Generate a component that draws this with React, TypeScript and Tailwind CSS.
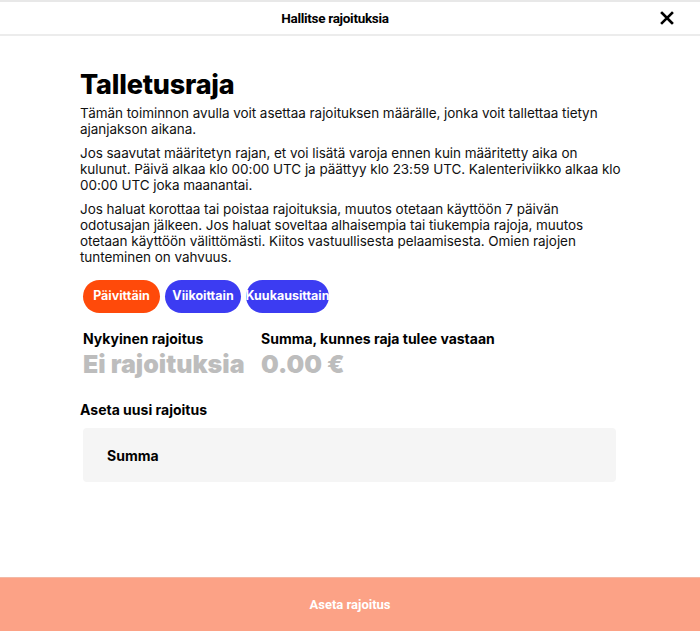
import React from "react";

export default function App() {
  const font = { fontFamily: "Inter, 'Noto Sans', sans-serif" };
  return (
    <div className="w-[700px] h-[631px] bg-white flex flex-col text-black" style={font}>
      <div className="h-[2px] bg-[#e8e8e8]" />
      <div className="relative h-[34px] flex items-center justify-center pr-[30px] border-b-2 border-[#ececec]">
        <span className="text-[13.5px] font-bold tracking-[-0.3px]" style={{ fontFamily: "Roboto, sans-serif" }}>Hallitse rajoituksia</span>
        <button className="absolute right-[25px] top-[8px] w-[16px] h-[16px] flex items-center justify-center">
          <svg width="14" height="14" viewBox="0 0 14 14">
            <path d="M2 2 L12 12 M12 2 L2 12" stroke="#000" strokeWidth="2.6" strokeLinecap="square" />
          </svg>
        </button>
      </div>
      <div className="flex-1 pl-[80px] pr-[78px] pt-[33px]">
        <h1 className="text-[27px] font-extrabold leading-[32px] tracking-[-0.2px]">Talletusraja</h1>
        <div className="mt-[4px] text-[13.5px] leading-[16px] tracking-[-0.05px] text-[#111] flex flex-col gap-[8px] w-[542px]">
          <p>Tämän toiminnon avulla voit asettaa rajoituksen määrälle, jonka voit tallettaa tietyn ajanjakson aikana.</p>
          <p>Jos saavutat määritetyn rajan, et voi lisätä varoja ennen kuin määritetty aika on kulunut. Päivä alkaa klo 00:00 UTC ja päättyy klo 23:59 UTC. Kalenteriviikko alkaa klo 00:00 UTC joka maanantai.</p>
          <p>Jos haluat korottaa tai poistaa rajoituksia, muutos otetaan käyttöön 7 päivän odotusajan jälkeen. Jos haluat soveltaa alhaisempia tai tiukempia rajoja, muutos otetaan käyttöön välittömästi. Kiitos vastuullisesta pelaamisesta. Omien rajojen tunteminen on vahvuus.</p>
        </div>
        <div className="pl-[3px] mt-[15px] flex gap-[5px]">
          <button className="h-[33px] w-[77px] rounded-full bg-[#ff4a0a] text-white text-[12.5px] font-bold">Päivittäin</button>
          <button className="h-[33px] w-[76px] rounded-full bg-[#3c3cf2] text-white text-[12.5px] font-bold">Viikoittain</button>
          <button className="h-[33px] w-[83px] rounded-full bg-[#3c3cf2] text-white text-[12.5px] font-bold whitespace-nowrap overflow-visible flex items-center justify-center">Kuukausittain</button>
        </div>
        <div className="pl-[3px] mt-[17px] flex">
          <div className="w-[178px]">
            <div className="text-[14px] font-bold leading-[18px]">Nykyinen rajoitus</div>
            <div className="text-[25px] font-black leading-[32px] text-[#bdbdbd] whitespace-nowrap">Ei rajoituksia</div>
          </div>
          <div>
            <div className="text-[14px] font-bold leading-[18px]">Summa, kunnes raja tulee vastaan</div>
            <div className="text-[25px] font-black leading-[32px] text-[#bdbdbd]">0.00 €</div>
          </div>
        </div>
        <div className="mt-[21px] text-[14px] font-bold leading-[18px]">Aseta uusi rajoitus</div>
        <div className="ml-[3px] mt-[9px] w-[533px] h-[54px] rounded-[4px] bg-[#f5f5f5] flex items-center pl-[24px]">
          <span className="text-[14px] font-bold">Summa</span>
        </div>
      </div>
      <button className="h-[54px] w-full bg-[#fca286] border-t border-[#f3b9a6] text-white text-[13px] font-bold" style={{ fontFamily: "Roboto, sans-serif" }}>
        Aseta rajoitus
      </button>
    </div>
  );
}
